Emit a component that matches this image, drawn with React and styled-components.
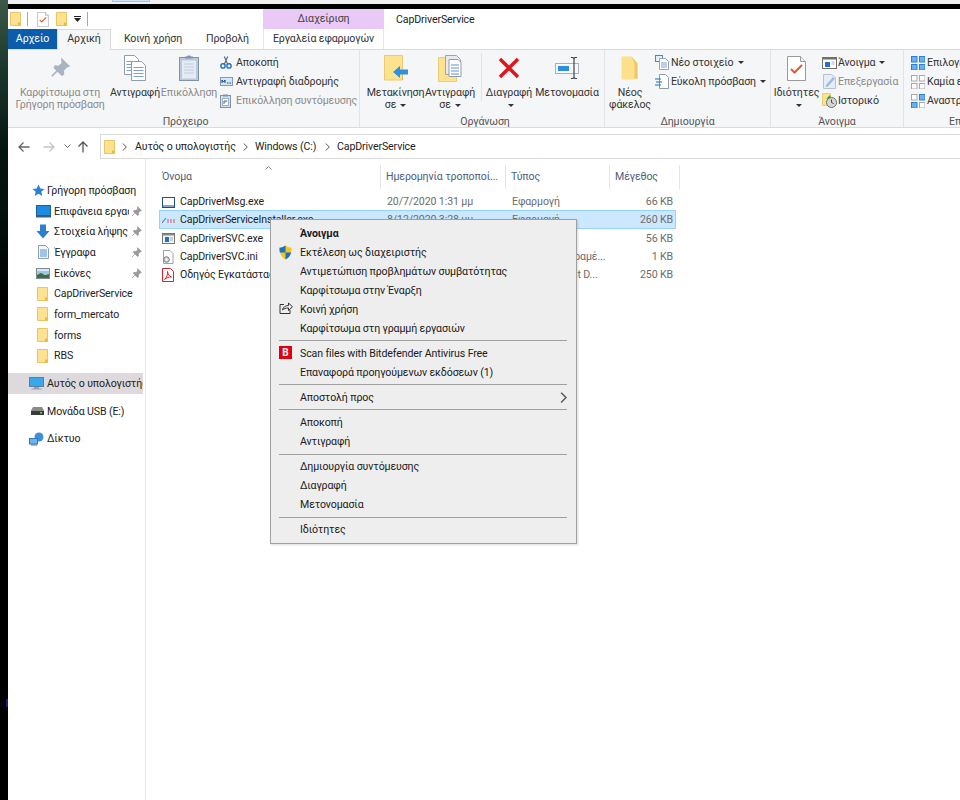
import React from 'react'
import styled, { createGlobalStyle } from 'styled-components'

const GlobalStyle = createGlobalStyle`
  html, body { margin: 0; padding: 0; background: #fff; }
  body { width: 960px; height: 800px; overflow: hidden; font-family: Roboto, "Noto Sans", sans-serif; font-size: 10.6px; letter-spacing: -.12px; color: #1a1a1a; }
  * { box-sizing: border-box; }
  svg { display: block; flex: none; }
`

const Page = styled.div`
  position: relative;
  width: 960px;
  height: 800px;
  display: flex;
  overflow: hidden;
`

const Wallpaper = styled.div`
  width: 8px;
  flex: none;
  padding-top: 699px;
  background: linear-gradient(#3d5a48 0, #1f3a30 60px, #04150f 150px, #04110c 210px, #000 300px);
`

const WallTick = styled.div`
  width: 2px;
  height: 8px;
  margin-left: 6px;
  background: #1a1a8c;
`

const Shell = styled.div`
  flex: 1;
  min-width: 0;
  display: flex;
  flex-direction: column;
`

const TopStrip = styled.div`
  height: 4px;
  background: #f0f0f0;
  flex: none;
  display: flex;
  align-items: flex-start;
`

const StripTab = styled.div`
  width: 38px;
  height: 2px;
  margin-left: 104px;
  background: #cfe3f7;
  border: 1px solid #9cc8ee;
  border-top: 0;
`

const BlackBar = styled.div`
  height: 5px;
  background: #000;
  flex: none;
`

const TitleRow = styled.div`
  height: 20px;
  flex: none;
  display: flex;
  align-items: center;
`

const Quick = styled.div`
  width: 255px;
  padding-left: 2px;
  display: flex;
  align-items: center;
`

const QuickSep = styled.div`
  width: 1px;
  height: 14px;
  background: #a8a8a8;
  margin: 0 ${p => p.$right}px 0 ${p => p.$left}px;
`

const ManageTab = styled.div`
  width: 121px;
  height: 20px;
  background: #e9c9f6;
  color: #444;
  text-align: center;
  line-height: 19px;
`

const WindowTitle = styled.div`
  padding-left: 12px;
  color: #222;
`

const TabRow = styled.div`
  height: 21px;
  flex: none;
  display: flex;
  border-bottom: 1px solid #dadbdc;
`

const FileTab = styled.div`
  width: 49px;
  height: 20px;
  background: #0b5dab;
  color: #fff;
  text-align: center;
  line-height: 19px;
`

const Tab = styled.div`
  width: ${p => p.$w}px;
  height: ${p => (p.$active ? 21 : 20)}px;
  text-align: center;
  line-height: 19px;
  color: #333;
  ${p => p.$active && 'background: #f5f6f7; border: 1px solid #dadbdc; border-bottom: 0; line-height: 18px;'}
`

const ToolsTab = styled.div`
  width: 121px;
  margin-left: 3px;
  height: 20px;
  text-align: center;
  line-height: 19px;
  color: #333;
  border-left: 1px solid #e6e6e6;
  border-right: 1px solid #e6e6e6;
`

const Ribbon = styled.div`
  height: 78px;
  flex: none;
  display: flex;
  background: #f5f6f7;
  border-bottom: 1px solid #dadbdc;
`

const Group = styled.div`
  width: ${p => p.$w}px;
  flex: none;
  display: flex;
  flex-direction: column;
  padding-top: 3px;
  padding-left: ${p => p.$pad || 0}px;
  border-right: 1px solid #e2e3e4;
`

const GroupBody = styled.div`
  flex: 1;
  display: flex;
  min-height: 0;
`

const GroupLabel = styled.div`
  height: 12px;
  line-height: 14px;
  text-align: ${p => p.$align || 'center'};
  padding-left: ${p => p.$pad || 0}px;
  color: #555;
  white-space: nowrap;
`

const Big = styled.div`
  width: ${p => p.$w}px;
  flex: none;
  display: flex;
  flex-direction: column;
  align-items: center;
  text-align: center;
  line-height: 12px;
  white-space: nowrap;
  color: ${p => (p.$off ? '#8a8a8a' : '#333')};
`

const BigIcon = styled.div`
  height: 30px;
  display: flex;
  align-items: center;
  margin-bottom: 4px;
`

const Caret = styled.span`
  display: inline-block;
  width: 0;
  height: 0;
  border: 3px solid transparent;
  border-top: 3px solid #333;
  border-bottom: 0;
  margin-left: 4px;
  vertical-align: middle;
`

const Stack = styled.div`
  display: flex;
  flex-direction: column;
  margin-left: ${p => p.$ml || 0}px;
`

const Small = styled.div`
  height: 19px;
  display: flex;
  align-items: center;
  white-space: nowrap;
  color: ${p => (p.$off ? '#8a8a8a' : '#333')};
`

const SmallIcon = styled.span`
  width: 16px;
  flex: none;
  display: flex;
  align-items: center;
`

const VSep = styled.div`
  width: 1px;
  height: 48px;
  background: #e2e3e4;
  margin: 0 2px 0 6px;
`

const AddressRow = styled.div`
  flex: none;
  height: 25px;
  margin-top: 6px;
  display: flex;
  align-items: center;
`

const NavButtons = styled.div`
  width: 92px;
  display: flex;
  align-items: center;
  padding-left: 10px;
`

const AddressBox = styled.div`
  flex: 1;
  height: 25px;
  border: 1px solid #d9d9d9;
  border-right: 0;
  display: flex;
  align-items: center;
  padding-left: 3px;
  color: #222;
`

const Crumb = styled.span`
  width: ${p => p.$w}px;
  flex: none;
  white-space: nowrap;
`

const Main = styled.div`
  flex: 1;
  min-height: 0;
  display: flex;
`

const NavPane = styled.div`
  width: 138px;
  flex: none;
  padding-top: 21px;
  border-right: 1px solid #e8e8e8;
`

const NavRow = styled.div`
  height: 20.7px;
  margin-right: 2px;
  display: flex;
  align-items: center;
  white-space: nowrap;
  overflow: hidden;
  padding-left: ${p => p.$indent}px;
  margin-top: ${p => p.$mt || 0}px;
  color: #222;
  background: ${p => (p.$active ? '#ddd9dd' : 'transparent')};
`

const NavIcon = styled.span`
  width: ${p => p.$w}px;
  flex: none;
  display: flex;
  align-items: center;
`

const NavText = styled.span`
  flex: 1;
  min-width: 0;
  overflow: hidden;
`

const Pin = styled.span`
  width: 14px;
  flex: none;
  display: flex;
  justify-content: center;
`

const FilePane = styled.div`
  position: relative;
  flex: 1;
  min-width: 0;
  padding: 6px 0 0 13px;
`

const SortMark = styled.div`
  position: absolute;
  left: 119px;
  top: 7px;
`

const ListGrid = `
  display: grid;
  grid-template-columns: 222px 125px 104px 66px;
  width: 517px;
`

const Header = styled.div`
  ${ListGrid}
  height: 22px;
  margin-bottom: 5px;
  width: 521px;
  grid-template-columns: 222px 125px 104px 70px;
`

const HeaderCell = styled.div`
  padding-left: ${p => (p.$first ? 3 : 5)}px;
  line-height: 24px;
  color: #4c607a;
  white-space: nowrap;
  border-right: 1px solid #e5e5e5;
`

const Row = styled.div`
  ${ListGrid}
  height: 18.3px;
  padding-top: 2px;
  align-items: center;
  line-height: 16px;
  outline: ${p => (p.$selected ? '1px solid #99d1ff' : 'none')};
  outline-offset: -1px;
  background: ${p => (p.$selected ? '#cce8ff' : 'transparent')};
`

const NameCell = styled.div`
  display: flex;
  align-items: center;
  padding-left: 3px;
  white-space: nowrap;
  overflow: hidden;
  color: #222;
`

const FileIcon = styled.span`
  width: 18px;
  flex: none;
  display: flex;
  align-items: center;
`

const DimCell = styled.div`
  padding-left: 6px;
  color: #6d6d6d;
  white-space: nowrap;
  overflow: hidden;
`

const SizeCell = styled.div`
  text-align: right;
  padding-right: 3px;
  color: #6d6d6d;
  white-space: nowrap;
`

const Menu = styled.div`
  position: absolute;
  left: 270px;
  top: 219px;
  width: 307px;
  height: 325px;
  padding: 3.5px 0;
  background: #eeeeee;
  border: 1px solid #a0a0a0;
  box-shadow: 1px 1px 2px rgba(0, 0, 0, .15);
  color: #1a1a1a;
`

const MenuRow = styled.div`
  position: relative;
  height: 19.05px;
  line-height: 19px;
  padding-left: 29px;
  font-weight: ${p => (p.$bold ? 700 : 400)};
  white-space: nowrap;
`

const MenuIcon = styled.span`
  position: absolute;
  left: 8px;
  top: 2px;
`

const MenuArrow = styled.span`
  position: absolute;
  right: 9px;
  top: 4px;
`

const MenuSep = styled.div`
  height: 1px;
  margin: 2.5px 9px 2.5px 8px;
  background: #a0a0a0;
`

const BdLogo = styled.span`
  display: block;
  width: 13px;
  height: 13px;
  background: #e2000f;
  color: #fff;
  font-size: 10px;
  font-weight: 700;
  line-height: 13px;
  text-align: center;
`

const Gap = styled.span`
  width: ${p => p.$w}px;
  flex: none;
`

const Folder = ({ w = 11, h = 14 }) => (
  <svg width={w} height={h} viewBox="0 0 11 14">
    <path d="M0.5 .5h10v13h-10z" fill="#fde38f" stroke="#e9c566" />
    <path d="M8 10.5h2.5v3h-2.5z" fill="#eab93f" />
  </svg>
)

const PinIcon = ({ s = 11, c = '#9a9a9a' }) => (
  <svg width={s} height={s} viewBox="0 0 16 16">
    <path d="M9.5 1l5.500 5.500-2 .8-2.500 2.700.3 3-1.300.7-6-6 .7-1.300 3 .3 2.700-2.500zM5.500 10.500L1.500 14.500" fill={c} stroke={c} strokeWidth="1.200" />
  </svg>
)

const PageDoc = ({ x, y }) => (
  <g>
    <path d={`M${x} ${y}h10l4 4v15h-14z`} fill="#fff" stroke="#8f9db0" />
    <path d={`M${x + 2} ${y + 6}h10M${x + 2} ${y + 9}h10M${x + 2} ${y + 12}h10M${x + 2} ${y + 15}h10`} stroke="#7d9fd8" />
  </g>
)

const CopyIcon = () => (
  <svg width="24" height="28" viewBox="0 0 24 28">
    <PageDoc x={1.500} y={1.500} />
    <PageDoc x={8.500} y={7.500} />
  </svg>
)

const PasteIcon = () => (
  <svg width="20" height="26" viewBox="0 0 20 26">
    <rect x=".5" y="2.500" width="19" height="23" fill="#bcc9dc" stroke="#8193ab" />
    <rect x="3" y="5.500" width="14" height="18" fill="#e4ebf5" />
    <path d="M5 9h10M5 12h10M5 15h10M5 18h10" stroke="#c1cee0" />
    <path d="M6 3.500h8v-2h-2l-1-1h-2l-1 1h-2z" fill="#8193ab" />
  </svg>
)

const Scissors = () => (
  <svg width="12" height="15" viewBox="0 0 14 16">
    <path d="M9 1L5 10M5 1l4 9" stroke="#5c6670" strokeWidth="1.300" fill="none" />
    <circle cx="3.500" cy="12" r="2.500" fill="none" stroke="#1c6fc0" strokeWidth="1.600" />
    <circle cx="10.500" cy="12" r="2.500" fill="none" stroke="#1c6fc0" strokeWidth="1.600" />
  </svg>
)

const PathIcon = () => (
  <svg width="13" height="9" viewBox="0 0 13 9">
    <rect x=".5" y=".5" width="12" height="8" fill="#d6e6f7" stroke="#7a9cc2" />
    <path d="M2 6V3l1.500 2L5 3v3" fill="none" stroke="#16436f" />
    <path d="M7 6h1.500M9.500 6h1.500" stroke="#16436f" />
  </svg>
)

const ShortcutIcon = () => (
  <svg width="11" height="14" viewBox="0 0 11 14">
    <rect x=".5" y="1.500" width="10" height="12" fill="#d8dfe9" stroke="#8193ab" />
    <path d="M3 0.500h5v2h-5z" fill="#8193ab" />
    <rect x="2.500" y="4.500" width="6" height="7" fill="#fff" stroke="#9fb0c7" />
    <path d="M4 10V7h2.500M5 8.500L7 6.500" stroke="#3b6ea8" fill="none" />
  </svg>
)

const MoveIcon = () => (
  <svg width="24" height="26" viewBox="0 0 24 26">
    <path d="M.5 .5h18v24.500h-18z" fill="#fde38f" stroke="#eccb73" />
    <path d="M18 17h1v8h-1z" fill="#e8b93f" />
    <path d="M9 17l7-6v3.500h8v5h-8v3.500z" fill="#2f8fe0" />
  </svg>
)

const CopyToIcon = () => (
  <svg width="24" height="27" viewBox="0 0 24 27">
    <path d="M.5 2.500h18v24h-18z" fill="#fde38f" stroke="#eccb73" />
    <path d="M7.500 .5h11l4 4v15h-15z" fill="#e8eaee" stroke="#9aa5b4" />
    <path d="M11 4.500h9l3 3v14h-12z" fill="#fff" stroke="#8f9db0" />
    <path d="M13 10h8M13 13h8M13 16h8M13 19h8" stroke="#5f8fd6" />
  </svg>
)

const DeleteIcon = () => (
  <svg width="22" height="22" viewBox="0 0 22 22">
    <path d="M2 2l18 18M20 2L2 20" stroke="#e0141d" strokeWidth="3.400" />
  </svg>
)

const RenameIcon = () => (
  <svg width="25" height="24" viewBox="0 0 25 24">
    <rect x=".5" y="7.500" width="23" height="10" fill="#f7f8fa" stroke="#a9b0b8" />
    <rect x="3" y="10" width="11" height="5" fill="#2d8ee0" />
    <path d="M19 2v20M16 1.500h2l1 1 1-1h2M16 22.500h2l1-1 1 1h2" stroke="#3d4650" strokeWidth="1.200" fill="none" />
  </svg>
)

const NewFolderIcon = () => (
  <svg width="18" height="24" viewBox="0 0 18 24">
    <path d="M.5 .5h10l6 7v15l-4 1h-12z" fill="#fde08a" />
    <path d="M10.500 .5l6 7v15h-3v-15z" fill="#eec667" />
  </svg>
)

const NewItemIcon = () => (
  <svg width="15" height="15" viewBox="0 0 15 15">
    <rect x=".5" y=".5" width="7" height="6" fill="#e3eefb" stroke="#4a86c8" />
    <path d="M4.500 3.500h6l3 3v8h-9z" fill="#fff" stroke="#9aa5b4" />
    <path d="M6 8h6M6 10h6M6 12h6" stroke="#7d9fd8" />
  </svg>
)

const EasyIcon = () => (
  <svg width="15" height="15" viewBox="0 0 15 15">
    <path d="M4.500 .5h6l3 3v11h-9z" fill="#fff" stroke="#8f9db0" />
    <path d="M0 5h6M1 8h6M0 11h6" stroke="#1c6fc0" strokeWidth="1.200" />
  </svg>
)

const CheckDoc = ({ w = 19, h = 25 }) => (
  <svg width={w} height={h} viewBox="0 0 19 25">
    <path d="M.5 .5h13l5 5v19h-18z" fill="#fff" stroke="#9a9a9a" />
    <path d="M13.500 .5v5h5" fill="#eee" stroke="#9a9a9a" />
    <path d="M4 13l3.500 3.500L15 9" fill="none" stroke="#ea5a24" strokeWidth="2" />
  </svg>
)

const OpenIcon = () => (
  <svg width="15" height="12" viewBox="0 0 15 12">
    <rect x=".5" y=".5" width="14" height="11" fill="#fff" stroke="#6f6f6f" />
    <path d="M.5 1h14v1.500h-14z" fill="#6f6f6f" />
    <rect x="3" y="5" width="5" height="5" fill="#2270c8" />
    <path d="M9.500 5h3M9.500 7h3" stroke="#b5b5b5" />
  </svg>
)

const EditIcon = () => (
  <svg width="15" height="15" viewBox="0 0 15 15">
    <path d="M1.500 .5h8l4 3v11h-12z" fill="#e6edf6" stroke="#b7c3d2" />
    <path d="M4 11l7-8 2 1.500-7 8-2.500.5z" fill="#9dbde4" />
  </svg>
)

const HistoryIcon = () => (
  <svg width="15" height="15" viewBox="0 0 15 15">
    <path d="M.5 .5h8v12h-8z" fill="#fde38f" stroke="#eccb73" />
    <circle cx="9.500" cy="9.500" r="5" fill="#d6d6d6" stroke="#6d6d6d" />
    <path d="M9.500 6.500v3l2 1" stroke="#444" fill="none" />
    <path d="M4 6l4-4 1 3z" fill="#2ea043" />
  </svg>
)

const Tiles = ({ on = [] }) => (
  <svg width="14" height="14" viewBox="0 0 14 14">
    {[[0, 0], [8, 0], [0, 8], [8, 8]].map(([x, y], i) => (
      <rect key={i} x={x + .5} y={y + .5} width="5.500" height="5.500" fill={on.includes(i) ? '#6db0ec' : '#fff'} stroke={on.includes(i) ? '#2c80d2' : '#a8a8a8'} />
    ))}
  </svg>
)

const Star = () => (
  <svg width="13" height="13" viewBox="0 0 13 13">
    <path d="M6.500 .5l1.800 4 4.200.4-3.200 2.800 1 4.300-3.800-2.300L2.700 12l1-4.300L.5 4.900l4.200-.4z" fill="#2b80cf" />
  </svg>
)

const DesktopIcon = () => (
  <svg width="15" height="13" viewBox="0 0 15 13">
    <rect x=".5" y=".5" width="14" height="10" fill="#1f8be0" stroke="#16649f" />
    <path d="M0 11h15v1.500H0z" fill="#3a5f85" />
  </svg>
)

const DownloadIcon = () => (
  <svg width="14" height="15" viewBox="0 0 14 15">
    <path d="M4 .5h6v6.500h3.500L7 14.500.5 7H4z" fill="#2f7fd0" />
  </svg>
)

const DocsIcon = () => (
  <svg width="11" height="14" viewBox="0 0 11 14">
    <path d="M.5 .5h7l3 3v10h-10z" fill="#f6f8fb" stroke="#8f9db0" />
    <path d="M2 5h7M2 7h7M2 9h7M2 11h7" stroke="#4f8ed6" />
  </svg>
)

const PicsIcon = () => (
  <svg width="14" height="11" viewBox="0 0 14 11">
    <rect x=".5" y=".5" width="13" height="10" fill="#d9e9f5" stroke="#7d8a97" />
    <path d="M1 3h12v3l-12 1z" fill="#9cc5e6" />
    <path d="M1 7l4-2 4 2 4-1v4H1z" fill="#3e6d45" />
  </svg>
)

const ComputerIcon = () => (
  <svg width="15" height="13" viewBox="0 0 15 13">
    <rect x=".5" y=".5" width="14" height="9" fill="#39a7ec" stroke="#5d7f9c" />
    <path d="M5 10h5v1.500h2.500v1h-10v-1H5z" fill="#8ea2b4" />
  </svg>
)

const UsbIcon = () => (
  <svg width="13" height="8" viewBox="0 0 13 8">
    <path d="M2 0h9l2 3.500v4.500H0V3.500z" fill="#8a8a8a" />
    <rect y="4" width="13" height="4" fill="#3a3a3a" />
    <rect x="9" y="5" width="2" height="1.500" fill="#6fd24a" />
  </svg>
)

const NetworkIcon = () => (
  <svg width="15" height="14" viewBox="0 0 15 14">
    <circle cx="10" cy="5" r="4.500" fill="#3f8fd6" />
    <rect x=".5" y="6.500" width="8" height="5.500" fill="#66b5f0" stroke="#3c75aa" />
    <path d="M2 13h6" stroke="#3c75aa" />
  </svg>
)

const WindowIcon = () => (
  <svg width="13" height="11" viewBox="0 0 13 11">
    <rect x=".5" y=".5" width="12" height="10" fill="#fff" stroke="#1d4f8c" />
    <path d="M.5 9h12" stroke="#1d4f8c" />
  </svg>
)

const InstallerIcon = () => (
  <svg width="14" height="7" viewBox="0 0 14 7">
    <path d="M0 6l4-5" stroke="#5d86c0" strokeWidth="1.200" />
    <path d="M5 3h9M5 5h9" stroke="#e0554b" strokeDasharray="2 1" />
  </svg>
)

const SvcIcon = () => (
  <svg width="13" height="11" viewBox="0 0 13 11">
    <rect x=".5" y=".5" width="12" height="10" fill="#f2f2f2" stroke="#777" />
    <path d="M1 1h11v1.500H1z" fill="#8a8a8a" />
    <rect x="3" y="4" width="4" height="5" fill="#1f6fc4" />
    <path d="M8 5h3M8 7h3" stroke="#aaa" />
  </svg>
)

const IniIcon = () => (
  <svg width="12" height="14" viewBox="0 0 12 14">
    <path d="M1.500 .5h6.500l3 3v10h-9.500z" fill="#fff" stroke="#a0a0a0" />
    <circle cx="4.500" cy="9.500" r="2.800" fill="#d5d5d5" stroke="#777" />
    <circle cx="4.500" cy="9.500" r="1" fill="#fff" />
  </svg>
)

const PdfIcon = () => (
  <svg width="12" height="14" viewBox="0 0 12 14">
    <path d="M.5 .5h8l3 3v10h-11z" fill="#fff" stroke="#d8232a" />
    <path d="M2.500 11.500c2-1.500 3.500-5 3-8 .5 3 2 5 4 5.500-2.500-.3-5 .8-7 2.500z" fill="none" stroke="#d8232a" />
  </svg>
)

const Shield = () => (
  <svg width="13" height="15" viewBox="0 0 13 15">
    <path d="M6.500 .5C8 1.800 10 2.500 12.500 2.700 12.700 8 10.500 12.300 6.500 14.500 2.500 12.300.3 8 .5 2.700 3 2.500 5 1.800 6.500.5z" fill="#f5c518" />
    <path d="M6.500 .5v7H.8C.6 6 .5 4.400.5 2.700 3 2.500 5 1.800 6.500.5zM6.500 7.500h5.700c-.8 3-2.800 5.500-5.700 7z" fill="#1a6fc9" />
  </svg>
)

const ShareIcon = () => (
  <svg width="14" height="12" viewBox="0 0 14 12">
    <path d="M5 2.500H1v9h10V8" fill="none" stroke="#333" />
    <path d="M3.500 8c.5-3 3-4.500 6-4.500V1l4 3.800-4 3.700V6c-2.500 0-4.500.5-6 2z" fill="none" stroke="#333" />
  </svg>
)

const Chevron = ({ c = '#555', s = 5 }) => (
  <svg width={s} height={s * 1.600} viewBox="0 0 5 8">
    <path d="M.8 .5l3.500 3.500-3.500 3.500" fill="none" stroke={c} strokeWidth="1" />
  </svg>
)

const Arrow = ({ flip, c }) => (
  <svg width="12" height="12" viewBox="0 0 12 12" style={{ transform: flip }}>
    <path d="M11.500 6H1M5.500 1.500L1 6l4.500 4.500" fill="none" stroke={c} strokeWidth="1.300" />
  </svg>
)

const navItems = [
  { icon: <Star />, text: 'Γρήγορη πρόσβαση', indent: 24, w: 15 },
  { icon: <DesktopIcon />, text: 'Επιφάνεια εργασίας', indent: 28, w: 18, pin: true },
  { icon: <DownloadIcon />, text: 'Στοιχεία λήψης', indent: 28, w: 18, pin: true },
  { icon: <DocsIcon />, text: 'Έγγραφα', indent: 30, w: 16, pin: true },
  { icon: <PicsIcon />, text: 'Εικόνες', indent: 28, w: 18, pin: true },
  { icon: <Folder />, text: 'CapDriverService', indent: 29, w: 17 },
  { icon: <Folder />, text: 'form_mercato', indent: 29, w: 17 },
  { icon: <Folder />, text: 'forms', indent: 29, w: 17 },
  { icon: <Folder />, text: 'RBS', indent: 29, w: 17 },
  { icon: <ComputerIcon />, text: 'Αυτός ο υπολογιστής', indent: 21, w: 18, active: true, mt: 7 },
  { icon: <UsbIcon />, text: 'Μονάδα USB (E:)', indent: 23, w: 16, mt: 7 },
  { icon: <NetworkIcon />, text: 'Δίκτυο', indent: 21, w: 18, mt: 7 },
]

const files = [
  { icon: <WindowIcon />, name: 'CapDriverMsg.exe', date: '20/7/2020 1:31 μμ', type: 'Εφαρμογή', size: '66 KB' },
  { icon: <InstallerIcon />, name: 'CapDriverServiceInstaller.exe', date: '8/12/2020 3:28 μμ', type: 'Εφαρμογή', size: '260 KB', selected: true },
  { icon: <SvcIcon />, name: 'CapDriverSVC.exe', date: '8/12/2020 3:28 μμ', type: 'Εφαρμογή', size: '56 KB' },
  { icon: <IniIcon />, name: 'CapDriverSVC.ini', date: '8/12/2020 3:28 μμ', type: 'Ρυθμίσεις παραμέ...', size: '1 KB' },
  { icon: <PdfIcon />, name: 'Οδηγός Εγκατάστασης.pdf', date: '8/12/2020 3:28 μμ', type: 'Adobe Acrobat D...', size: '250 KB' },
]

const menu = [
  [
    { text: 'Άνοιγμα', bold: true },
    { text: 'Εκτέλεση ως διαχειριστής', icon: <Shield /> },
    { text: 'Αντιμετώπιση προβλημάτων συμβατότητας' },
    { text: 'Καρφίτσωμα στην Έναρξη' },
    { text: 'Κοινή χρήση', icon: <ShareIcon /> },
    { text: 'Καρφίτσωμα στη γραμμή εργασιών' },
  ],
  [
    { text: 'Scan files with Bitdefender Antivirus Free', icon: <BdLogo>B</BdLogo> },
    { text: 'Επαναφορά προηγούμενων εκδόσεων (1)' },
  ],
  [{ text: 'Αποστολή προς', arrow: true }],
  [{ text: 'Αποκοπή' }, { text: 'Αντιγραφή' }],
  [{ text: 'Δημιουργία συντόμευσης' }, { text: 'Διαγραφή' }, { text: 'Μετονομασία' }],
  [{ text: 'Ιδιότητες' }],
]

const App = () => (
  <Page>
    <GlobalStyle />
    <Wallpaper><WallTick /></Wallpaper>
    <Shell>
      <TopStrip><StripTab /></TopStrip>
      <BlackBar />
      <TitleRow>
        <Quick>
          <Folder />
          <QuickSep $left={6} $right={9} />
          <CheckDoc w={12} h={15} />
          <Gap $w={7} />
          <Folder />
          <Gap $w={7} />
          <svg width="7" height="6" viewBox="0 0 7 6"><path d="M0 0h7v1H0zM0 2h7L3.500 6z" fill="#222" /></svg>
          <QuickSep $left={6} $right={0} />
        </Quick>
        <ManageTab>Διαχείριση</ManageTab>
        <WindowTitle>CapDriverService</WindowTitle>
      </TitleRow>
      <TabRow>
        <FileTab>Αρχείο</FileTab>
        <Tab $w={54} $active>Αρχική</Tab>
        <Tab $w={84}>Κοινή χρήση</Tab>
        <Tab $w={65}>Προβολή</Tab>
        <ToolsTab>Εργαλεία εφαρμογών</ToolsTab>
      </TabRow>
      <Ribbon>
        <Group $w={352} $pad={4}>
          <GroupBody>
            <Big $w={96} $off>
              <BigIcon><PinIcon s={20} c="#a9b4c0" /></BigIcon>
              <span>Καρφίτσωμα στη</span>
              <span>Γρήγορη πρόσβαση</span>
            </Big>
            <Big $w={54}>
              <BigIcon><CopyIcon /></BigIcon>
              <span>Αντιγραφή</span>
            </Big>
            <Big $w={54} $off>
              <BigIcon><PasteIcon /></BigIcon>
              <span>Επικόλληση</span>
            </Big>
            <Stack $ml={4}>
              <Small><SmallIcon><Scissors /></SmallIcon>Αποκοπή</Small>
              <Small><SmallIcon><PathIcon /></SmallIcon>Αντιγραφή διαδρομής</Small>
              <Small $off><SmallIcon><ShortcutIcon /></SmallIcon>Επικόλληση συντόμευσης</Small>
            </Stack>
          </GroupBody>
          <GroupLabel>Πρόχειρο</GroupLabel>
        </Group>
        <Group $w={245} $pad={6}>
          <GroupBody>
            <Big $w={59}>
              <BigIcon><MoveIcon /></BigIcon>
              <span>Μετακίνηση</span>
              <span>σε<Caret /></span>
            </Big>
            <Big $w={50}>
              <BigIcon><CopyToIcon /></BigIcon>
              <span>Αντιγραφή</span>
              <span>σε<Caret /></span>
            </Big>
            <VSep />
            <Big $w={50}>
              <BigIcon><DeleteIcon /></BigIcon>
              <span>Διαγραφή</span>
              <span><Caret /></span>
            </Big>
            <Big $w={66}>
              <BigIcon><RenameIcon /></BigIcon>
              <span>Μετονομασία</span>
            </Big>
          </GroupBody>
          <GroupLabel>Οργάνωση</GroupLabel>
        </Group>
        <Group $w={166}>
          <GroupBody>
            <Big $w={50}>
              <BigIcon><NewFolderIcon /></BigIcon>
              <span>Νέος</span>
              <span>φάκελος</span>
            </Big>
            <Stack>
              <Small><SmallIcon><NewItemIcon /></SmallIcon>Νέο στοιχείο<Caret /></Small>
              <Small><SmallIcon><EasyIcon /></SmallIcon>Εύκολη πρόσβαση<Caret /></Small>
            </Stack>
          </GroupBody>
          <GroupLabel>Δημιουργία</GroupLabel>
        </Group>
        <Group $w={133}>
          <GroupBody>
            <Big $w={51}>
              <BigIcon><CheckDoc /></BigIcon>
              <span>Ιδιότητες</span>
              <span><Caret /></span>
            </Big>
            <Stack>
              <Small><SmallIcon><OpenIcon /></SmallIcon>Άνοιγμα<Caret /></Small>
              <Small $off><SmallIcon><EditIcon /></SmallIcon>Επεξεργασία</Small>
              <Small><SmallIcon><HistoryIcon /></SmallIcon>Ιστορικό</Small>
            </Stack>
          </GroupBody>
          <GroupLabel>Άνοιγμα</GroupLabel>
        </Group>
        <Group $w={160} $pad={7}>
          <GroupBody>
            <Stack>
              <Small><SmallIcon><Tiles on={[0, 1, 2, 3]} /></SmallIcon>Επιλογή όλων</Small>
              <Small><SmallIcon><Tiles /></SmallIcon>Καμία επιλογή</Small>
              <Small><SmallIcon><Tiles on={[1, 2]} /></SmallIcon>Αναστροφή επιλογής</Small>
            </Stack>
          </GroupBody>
          <GroupLabel $align="left" $pad={38}>Επιλογή</GroupLabel>
        </Group>
      </Ribbon>
      <AddressRow>
        <NavButtons>
          <Arrow c="#666" />
          <Gap $w={13} />
          <Arrow flip="scaleX(-1)" c="#c4c4c4" />
          <Gap $w={9} />
          <svg width="7" height="5" viewBox="0 0 7 5"><path d="M.5 .5L3.500 3.500 6.500 .5" fill="none" stroke="#777" /></svg>
          <Gap $w={6} />
          <Arrow flip="rotate(90deg)" c="#555" />
        </NavButtons>
        <AddressBox>
          <Folder />
          <Gap $w={7} />
          <Chevron />
          <Gap $w={8} />
          <Crumb $w={108}>Αυτός ο υπολογιστής</Crumb>
          <Chevron />
          <Gap $w={7} />
          <Crumb $w={70}>Windows (C:)</Crumb>
          <Chevron />
          <Gap $w={7} />
          <Crumb $w={90}>CapDriverService</Crumb>
        </AddressBox>
      </AddressRow>
      <Main>
        <NavPane>
          {navItems.map(item => (
            <NavRow key={item.text} $indent={item.indent} $active={item.active} $mt={item.mt}>
              <NavIcon $w={item.w}>{item.icon}</NavIcon>
              <NavText>{item.text}</NavText>
              {item.pin && <Pin><PinIcon /></Pin>}
            </NavRow>
          ))}
        </NavPane>
        <FilePane>
          <SortMark>
            <svg width="7" height="4" viewBox="0 0 7 4"><path d="M.5 3.500L3.500 .5l3 3" fill="none" stroke="#888" /></svg>
          </SortMark>
          <Header>
            <HeaderCell $first>Όνομα</HeaderCell>
            <HeaderCell>Ημερομηνία τροποποί...</HeaderCell>
            <HeaderCell>Τύπος</HeaderCell>
            <HeaderCell>Μέγεθος</HeaderCell>
          </Header>
          {files.map(f => (
            <Row key={f.name} $selected={f.selected}>
              <NameCell><FileIcon>{f.icon}</FileIcon>{f.name}</NameCell>
              <DimCell>{f.date}</DimCell>
              <DimCell>{f.type}</DimCell>
              <SizeCell>{f.size}</SizeCell>
            </Row>
          ))}
        </FilePane>
      </Main>
    </Shell>
    <Menu>
      {menu.map((group, i) => (
        <React.Fragment key={i}>
          {i > 0 && <MenuSep />}
          {group.map(item => (
            <MenuRow key={item.text} $bold={item.bold}>
              {item.icon && <MenuIcon>{item.icon}</MenuIcon>}
              {item.text}
              {item.arrow && <MenuArrow><Chevron c="#555" s={7} /></MenuArrow>}
            </MenuRow>
          ))}
        </React.Fragment>
      ))}
    </Menu>
  </Page>
)

export default App
